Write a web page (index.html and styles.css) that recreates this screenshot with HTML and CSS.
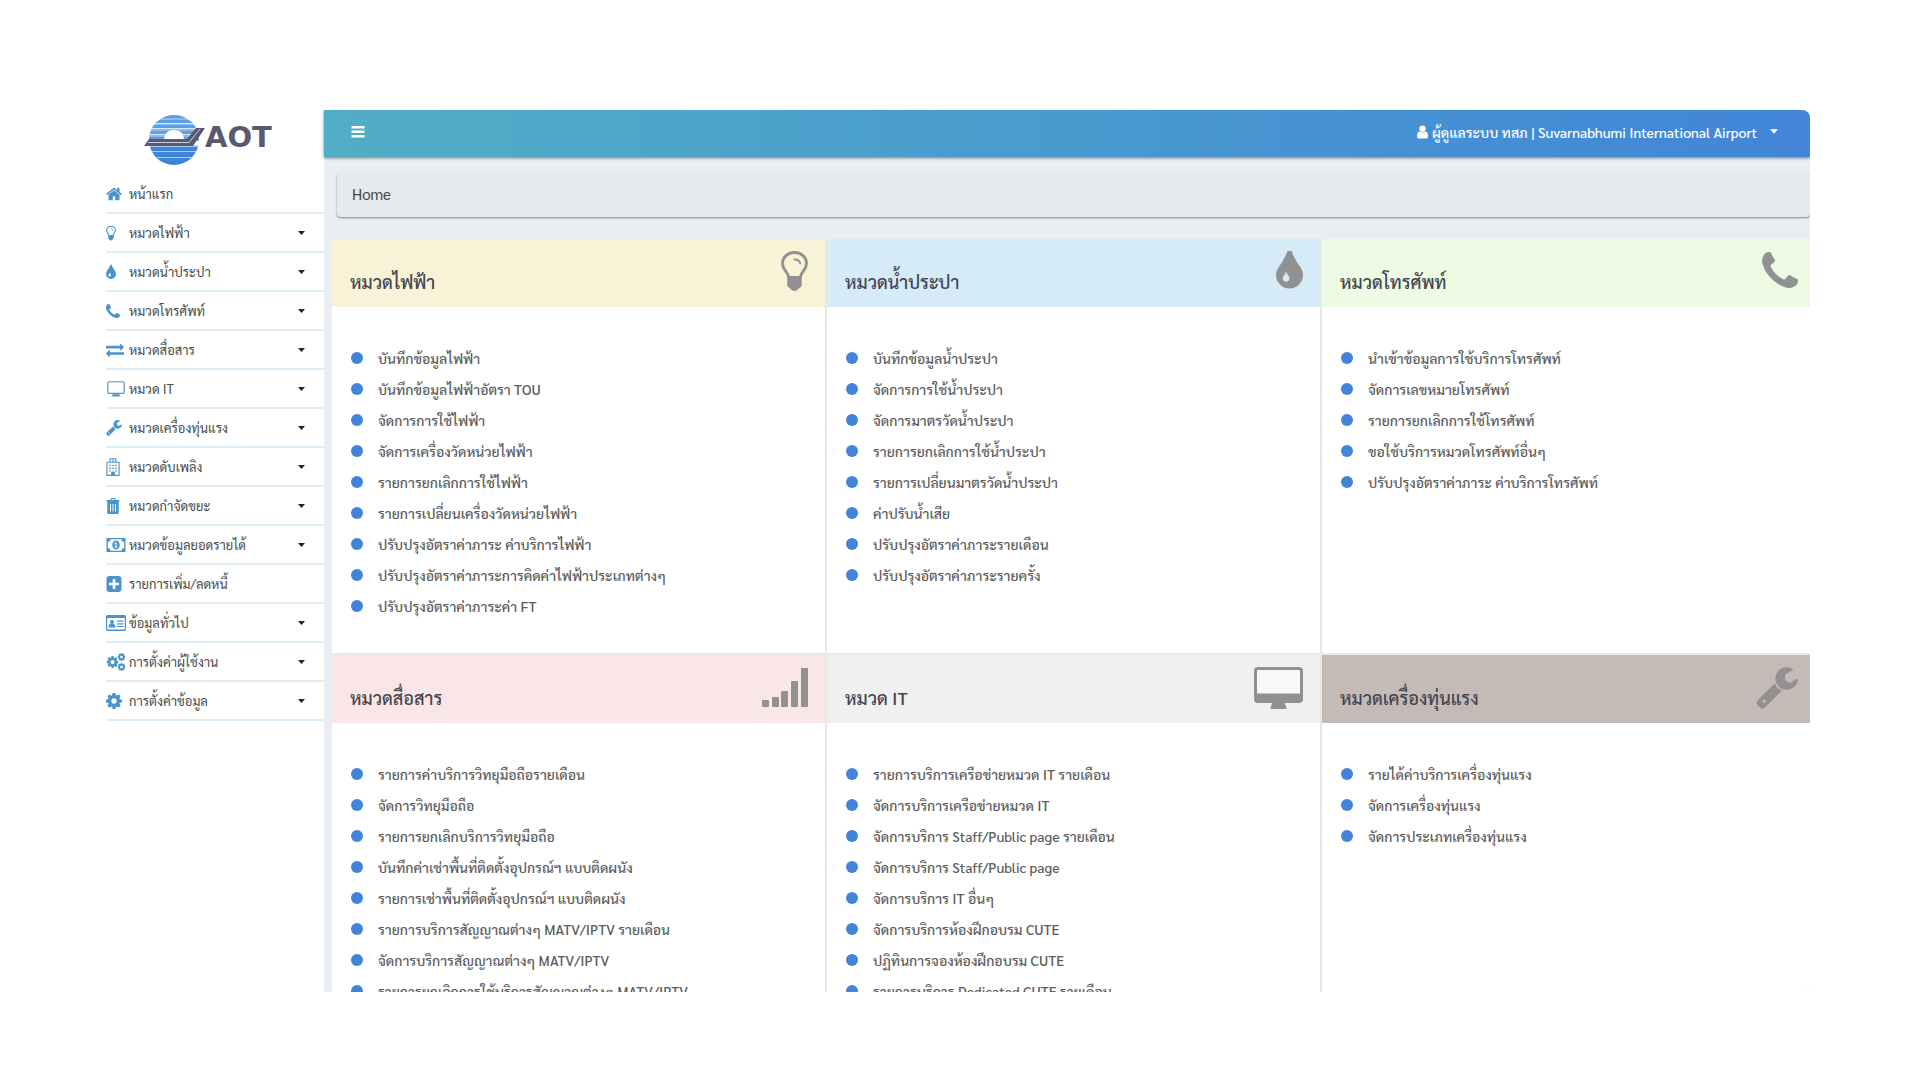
FILE: index.html
```html
<!DOCTYPE html>
<html lang="th">
<head>
<meta charset="utf-8">
<meta name="viewport" content="width=device-width, initial-scale=1">
<title>AOT Utility Management</title>
<link rel="stylesheet" href="styles.css">
</head>
<body>
<svg class="sprite" aria-hidden="true">
  <symbol id="i-home" viewBox="64 256 1664 1280"><path d="M1472 992v480q0 26-19 45t-45 19h-384v-384h-256v384h-384q-26 0-45-19t-19-45v-480q0-1 .5-3t.5-3l575-474 575 474q1 2 1 6zm223-69l-62 74q-8 9-21 11h-3q-13 0-21-7l-692-577-692 577q-12 8-24 7-13-2-21-11l-62-74q-8-10-7-23.5t11-21.5l719-599q32-26 76-26t76 26l244 204v-195q0-14 9-23t23-9h192q14 0 23 9t9 23v408l219 182q10 8 11 21.5t-7 23.5z"/></symbol>
  <symbol id="i-bulb" viewBox="0 0 27 40"><path d="M13.500 1.500C6.800 1.500 1.500 6.300 1.500 12.200c0 3.300 1.500 5.700 3.400 8.100 1.800 2.300 2.600 4 2.800 6.200h11.600c.2-2.200 1-3.900 2.800-6.200 1.900-2.400 3.400-4.800 3.400-8.100 0-5.900-5.300-10.700-12-10.700z" fill="none" stroke="currentColor" stroke-width="2.800"/><path d="M6.300 26h14.400v8.200c0 1.400-1.500 2-3 3.400-1 1.500-2.300 2.400-4.200 2.400s-3.200-.9-4.200-2.400c-1.500-1.400-3-2-3-3.400z"/><path d="M13.500 8.500c3 0 5.300 1.300 5.700 4" fill="none" stroke="currentColor" stroke-width="1.800" stroke-linecap="round"/></symbol>
  <symbol id="i-tint" viewBox="384 128 1024 1408"><path d="M896 1152q0-36-20-69-1-1-15.500-22.500t-25.500-38-25-44-21-50.500q-4-16-21-16t-21 16q-7 23-21 50.500t-25 44-25.500 38-15.500 22.500q-20 33-20 69 0 53 37.500 90.500t90.500 37.500 90.500-37.500 37.500-90.500zm512-128q0 212-150 362t-362 150-362-150-150-362q0-145 81-275 6-9 62.500-90.500t101-151 99.500-178 83-201.500q9-30 34-47t51-17 51.500 17 33.500 47q28 93 83 201.500t99.500 178 101 151 62.500 90.500q81 127 81 275z"/></symbol>
  <symbol id="i-phone" viewBox="192 128 1408 1408"><path d="M1600 1240q0 27-10 70.500t-21 68.500q-21 50-122 106-94 51-186 51-27 0-53-3.500t-57.500-12.500-47-14.500-55.500-20.500-49-18q-98-35-175-83-127-79-264-216t-216-264q-48-77-83-175-3-9-18-49t-20.500-55.500-14.500-47-12.500-57.500-3.500-53q0-92 51-186 56-101 106-122 25-11 68.500-21t70.500-10q14 0 21 3 18 6 53 76 11 19 30 54t35 63.500 31 53.500q3 4 17.500 25t21.500 35.500 7 28.500q0 20-28.500 50t-62 55-62 53-28.500 46q0 9 5 22.500t8.500 20.500 14 24 11.500 19q76 137 174 235t235 174q2 1 19 11.500t24 14 20.500 8.500 22.500 5q18 0 46-28.500t53-62 55-62 50-28.500q14 0 28.500 7t35.500 21.500 25 17.500q25 15 53.500 31t63.500 35 54 30q70 35 76 53 3 7 3 21z"/></symbol>
  <symbol id="i-exchange" viewBox="0 256 1792 1344"><path d="M1792 1184v192q0 13-9.500 22.500t-22.500 9.500h-1376v192q0 13-9.500 22.500t-22.500 9.500q-12 0-24-10l-319-320q-9-9-9-22 0-14 9-23l320-320q9-9 23-9 13 0 22.500 9.500t9.500 22.500v192h1376q13 0 22.500 9.500t9.500 22.500zm0-544q0 14-9 23l-320 320q-9 9-23 9-13 0-22.500-9.500t-9.500-22.500v-192h-1376q-13 0-22.500-9.500t-9.500-22.500v-192q0-13 9.500-22.500t22.500-9.500h1376v-192q0-14 9-23t23-9q12 0 24 10l319 319q9 9 9 23z"/></symbol>
  <symbol id="i-desktop" viewBox="0 0 49 42"><path d="M3 3h43v23.500H3z" fill="#fff" opacity=".5"/><path fill-rule="evenodd" d="M4 0h41a4 4 0 0 1 4 4v28a4 4 0 0 1-4 4H31c0 2 1.500 3.500 1.500 5 0 .6-.4 1-1 1h-14c-.6 0-1-.4-1-1 0-1.500 1.500-3 1.500-5H4a4 4 0 0 1-4-4V4a4 4 0 0 1 4-4zm0 3a1 1 0 0 0-1 1v22.500h43V4a1 1 0 0 0-1-1z"/></symbol>
  <symbol id="i-monitor" viewBox="0 0 19 17"><rect x=".8" y=".8" width="17.400" height="12.400" rx="1.500" fill="none" stroke="currentColor" stroke-width="1.300"/><path d="M6 14h7l1 2.500H5z"/></symbol>
  <symbol id="i-wrench" viewBox="64 0 1664 1664"><path d="M448 1472q0-26-19-45t-45-19-45 19-19 45 19 45 45 19 45-19 19-45zm644-420l-682 682q-37 37-90 37-52 0-91-37l-106-108q-38-36-38-90 0-53 38-91l681-681q39 98 114.500 173.500t173.500 114.500zm634-435q0 39-23 106-47 134-164.500 217.500t-258.500 83.500q-185 0-316.500-131.500t-131.500-316.500 131.500-316.500 316.500-131.500q58 0 121.500 16.500t107.500 46.500q16 11 16 28t-16 28l-293 169v224l193 107q5-3 79-48.500t135.500-81 70.500-35.500q15 0 23.500 10t8.500 25z" transform="translate(0 -118)"/></symbol>
  <symbol id="i-signal" viewBox="0 0 46 40"><rect y="33" width="7" height="7" rx="1"/><rect x="10" y="30" width="7" height="10" rx="1"/><rect x="19" y="24" width="7" height="16" rx="1"/><rect x="29" y="14" width="7" height="26" rx="1"/><rect x="39" y="1" width="7" height="39" rx="1"/></symbol>
  <symbol id="i-hospital" viewBox="0 0 14 19"><path d="M.6 4.500h12.800v13.900H.6zM4 4.500V.8h6v3.700" fill="none" stroke="currentColor" stroke-width="1.200"/><path d="M3 7h1.500v1.500H3zm3.200 0h1.500v1.500H6.200zm3.300 0H11v1.500H9.500zM3 10h1.500v1.500H3zm3.200 0h1.500v1.500H6.200zm3.300 0H11v1.500H9.500zM3 13h1.500v1.500H3zm6.500 0H11v1.500H9.500zM5 18v-3l2-1 2 1v3zM6.400 1.500h1.200v3H6.400z"/></symbol>
  <symbol id="i-trash" viewBox="0 0 13 16"><path fill-rule="evenodd" d="M4 2V.9Q4 0 5 0h3q1 0 1 .9V2h4v1.500h-.8v11q0 1.500-1.400 1.500H2.200Q.8 16 .8 14.500v-11H0V2zm1 0h3V1H5zM3.500 6v7.500h1V6zm2.500 0v7.500h1V6zm2.500 0v7.500h1V6z"/></symbol>
  <symbol id="i-money" viewBox="0 0 19 14"><path fill-rule="evenodd" d="M0 0h19v14H0zm4 1.300Q4 4 1.300 4v6Q4 10 4 12.700h11q0-2.700 2.700-2.700V4Q15 4 15 1.300z"/><path fill-rule="evenodd" d="M9.500 2.500c2.300 0 3.700 2 3.700 4.500s-1.400 4.500-3.700 4.500S5.800 9.500 5.800 7s1.400-4.500 3.700-4.500zM9 4.500L7.800 5.600l.5.500.7-.4v2.800H8v1h3v-1h-1v-4z"/></symbol>
  <symbol id="i-plus" viewBox="0 0 15 16"><path fill-rule="evenodd" d="M3 0h9a3 3 0 0 1 3 3v10a3 3 0 0 1-3 3H3a3 3 0 0 1-3-3V3a3 3 0 0 1 3-3zm3.200 3v3.700H2.500v2.600h3.700V13h2.600V9.300h3.700V6.700H8.800V3z"/></symbol>
  <symbol id="i-card" viewBox="0 0 20 16"><path fill-rule="evenodd" d="M1.500 0h17Q20 0 20 1.500v13q0 1.500-1.500 1.500h-17Q0 16 0 14.500v-13Q0 0 1.500 0zM1.200 3v11.500h17.600V3z"/><circle cx="6" cy="7" r="2"/><path d="M2.500 12.500Q2.500 8.500 6 8.500t3.500 4zM11 5.500h6.500v1.200H11zm0 2.700h6.500v1.200H11zm0 2.700h6.500v1.200H11z"/></symbol>
  <symbol id="i-cog" viewBox="128 128 1536 1536"><path d="M1152 896q0-106-75-181t-181-75-181 75-75 181 75 181 181 75 181-75 75-181zm512-109v222q0 12-8 23t-20 13l-185 28q-19 54-39 91 35 50 107 138 10 12 10 25t-9 23q-27 37-99 108t-94 71q-12 0-26-9l-138-108q-44 23-91 38-16 136-29 186-7 28-36 28h-222q-14 0-24.500-8.500t-11.500-21.500l-28-184q-49-16-90-37l-141 107q-10 9-25 9-14 0-25-11-126-114-165-168-7-10-7-23 0-12 8-23 15-21 51-66.500t54-70.500q-27-50-41-99l-183-27q-13-2-21-12.500t-8-23.500v-222q0-12 8-23t19-13l186-28q14-46 39-92-40-57-107-138-10-12-10-24 0-10 9-23 26-36 98.500-107.500t94.500-71.500q13 0 26 10l138 107q44-23 91-38 16-136 29-186 7-28 36-28h222q14 0 24.500 8.500t11.500 21.500l28 184q49 16 90 37l142-107q9-9 24-9 13 0 25 10 129 119 165 170 7 8 7 22 0 12-8 23-15 21-51 66.500t-54 70.500q26 50 41 98l183 28q13 2 21 12.500t8 23.500z"/></symbol>
  <symbol id="i-cogs" viewBox="0 0 19 18"><use href="#i-cog" y="3" width="12" height="12"/><use href="#i-cog" x="11" width="8" height="8"/><use href="#i-cog" x="11" y="10" width="8" height="8"/></symbol>
  <symbol id="i-user" viewBox="256 128 1280 1536"><path d="M1536 1399q0 109-62.500 187t-150.500 78h-854q-88 0-150.500-78t-62.500-187q0-85 8.500-160.500t31.500-152 58.500-131 94-89 134.500-34.500q131 128 313 128t313-128q76 0 134.500 34.500t94 89 58.500 131 31.500 152 8.500 160.500zm-256-887q0 159-112.500 271.500t-271.500 112.500-271.500-112.500-112.500-271.500 112.500-271.500 271.500-112.500 271.500 112.500 112.500 271.500z"/></symbol>
  <symbol id="i-caret" viewBox="0 0 7 4"><path d="M0 0h7L3.500 4z"/></symbol>
  <symbol id="i-bars" viewBox="0 0 13 12"><path d="M0 0h13v2.500H0zm0 4.500h13V7H0zM0 9h13v2.500H0z"/></symbol>
</svg>

<div class="app">
  <aside class="sidebar">
    <a class="logo" href="#" aria-label="AOT">
      <svg viewBox="0 0 134 54">
        <defs><clipPath id="globe"><circle cx="30" cy="28" r="25"/></clipPath></defs>
        <g clip-path="url(#globe)">
          <path fill="#8dbcec" d="M0 2h60v27H0z"/>
          <path fill="#5c9fe4" d="M0 3h60v3H0zm0 5h60v3H0zm0 5h60v4H0zm0 6h60v4H0zm0 6h60v4H0z"/>
          <path fill="#d7e9fa" d="M0 11h60v1H0zm0 5h60v1H0zm0 6h60v1H0z"/>
          <path fill="#3f84da" d="M0 34h60v5H0zm0 6h60v6H0zm0 6h60v8H0z"/>
          <path fill="#a9cdf2" d="M0 33h60v2H0zm0 6h60v1H0zm0 6h60v1H0z"/>
        </g>
        <path fill="#fff" d="M20 27q1-9 10-9t10 9z"/>
        <path fill="#595a70" d="M5 27h38l9-11h9L49 34H0z"/>
        <path stroke="#c9cbd6" fill="none" d="M4 30.500h41L56 17"/>
        <text class="wordmark" x="61" y="35">AOT</text>
      </svg>
    </a>
    <nav class="menu">
      <a href="#"><svg class="ic w16 h14"><use href="#i-home"/></svg>หน้าแรก</a>
      <a href="#"><svg class="ic w10 h16"><use href="#i-bulb"/></svg>หมวดไฟฟ้า<svg class="caret"><use href="#i-caret"/></svg></a>
      <a href="#"><svg class="ic w10 h16"><use href="#i-tint"/></svg>หมวดน้ำประปา<svg class="caret"><use href="#i-caret"/></svg></a>
      <a href="#"><svg class="ic w14 h16"><use href="#i-phone"/></svg>หมวดโทรศัพท์<svg class="caret"><use href="#i-caret"/></svg></a>
      <a href="#"><svg class="ic w18 h14"><use href="#i-exchange"/></svg>หมวดสื่อสาร<svg class="caret"><use href="#i-caret"/></svg></a>
      <a href="#"><svg class="ic w20 h16"><use href="#i-monitor"/></svg>หมวด IT<svg class="caret"><use href="#i-caret"/></svg></a>
      <a href="#"><svg class="ic w16 h16"><use href="#i-wrench"/></svg>หมวดเครื่องทุ่นแรง<svg class="caret"><use href="#i-caret"/></svg></a>
      <a href="#"><svg class="ic w14 h18"><use href="#i-hospital"/></svg>หมวดดับเพลิง<svg class="caret"><use href="#i-caret"/></svg></a>
      <a href="#"><svg class="ic w14 h16"><use href="#i-trash"/></svg>หมวดกำจัดขยะ<svg class="caret"><use href="#i-caret"/></svg></a>
      <a href="#"><svg class="ic w20 h14"><use href="#i-money"/></svg>หมวดข้อมูลยอดรายได้<svg class="caret"><use href="#i-caret"/></svg></a>
      <a href="#"><svg class="ic w16 h16"><use href="#i-plus"/></svg>รายการเพิ่ม/ลดหนี้</a>
      <a href="#"><svg class="ic w20 h16"><use href="#i-card"/></svg>ข้อมูลทั่วไป<svg class="caret"><use href="#i-caret"/></svg></a>
      <a href="#"><svg class="ic w20 h18"><use href="#i-cogs"/></svg>การตั้งค่าผู้ใช้งาน<svg class="caret"><use href="#i-caret"/></svg></a>
      <a href="#"><svg class="ic w16 h16"><use href="#i-cog"/></svg>การตั้งค่าข้อมูล<svg class="caret"><use href="#i-caret"/></svg></a>
    </nav>
  </aside>

  <main class="main">
    <header class="topbar">
      <button class="toggle" type="button" aria-label="เมนู"><svg><use href="#i-bars"/></svg></button>
      <button class="account" type="button"><svg class="user"><use href="#i-user"/></svg><span>ผู้ดูแลระบบ ทสภ | Suvarnabhumi International Airport</span><svg class="caret"><use href="#i-caret"/></svg></button>
    </header>
    <div class="crumb">Home</div>
    <div class="cards">
      <section class="card yellow">
        <h2>หมวดไฟฟ้า<svg class="w27 h40"><use href="#i-bulb"/></svg></h2>
        <ul>
          <li><a href="#">บันทึกข้อมูลไฟฟ้า</a></li>
          <li><a href="#">บันทึกข้อมูลไฟฟ้าอัตรา TOU</a></li>
          <li><a href="#">จัดการการใช้ไฟฟ้า</a></li>
          <li><a href="#">จัดการเครื่องวัดหน่วยไฟฟ้า</a></li>
          <li><a href="#">รายการยกเลิกการใช้ไฟฟ้า</a></li>
          <li><a href="#">รายการเปลี่ยนเครื่องวัดหน่วยไฟฟ้า</a></li>
          <li><a href="#">ปรับปรุงอัตราค่าภาระ ค่าบริการไฟฟ้า</a></li>
          <li><a href="#">ปรับปรุงอัตราค่าภาระการคิดค่าไฟฟ้าประเภทต่างๆ</a></li>
          <li><a href="#">ปรับปรุงอัตราค่าภาระค่า FT</a></li>
        </ul>
      </section>
      <section class="card blue">
        <h2>หมวดน้ำประปา<svg class="w27 h38"><use href="#i-tint"/></svg></h2>
        <ul>
          <li><a href="#">บันทึกข้อมูลน้ำประปา</a></li>
          <li><a href="#">จัดการการใช้น้ำประปา</a></li>
          <li><a href="#">จัดการมาตรวัดน้ำประปา</a></li>
          <li><a href="#">รายการยกเลิกการใช้น้ำประปา</a></li>
          <li><a href="#">รายการเปลี่ยนมาตรวัดน้ำประปา</a></li>
          <li><a href="#">ค่าปรับน้ำเสีย</a></li>
          <li><a href="#">ปรับปรุงอัตราค่าภาระรายเดือน</a></li>
          <li><a href="#">ปรับปรุงอัตราค่าภาระรายครั้ง</a></li>
        </ul>
      </section>
      <section class="card green">
        <h2>หมวดโทรศัพท์<svg class="w36 h38"><use href="#i-phone"/></svg></h2>
        <ul>
          <li><a href="#">นำเข้าข้อมูลการใช้บริการโทรศัพท์</a></li>
          <li><a href="#">จัดการเลขหมายโทรศัพท์</a></li>
          <li><a href="#">รายการยกเลิกการใช้โทรศัพท์</a></li>
          <li><a href="#">ขอใช้บริการหมวดโทรศัพท์อื่นๆ</a></li>
          <li><a href="#">ปรับปรุงอัตราค่าภาระ ค่าบริการโทรศัพท์</a></li>
        </ul>
      </section>
      <section class="card pink">
        <h2>หมวดสื่อสาร<svg class="w46 h40"><use href="#i-signal"/></svg></h2>
        <ul>
          <li><a href="#">รายการค่าบริการวิทยุมือถือรายเดือน</a></li>
          <li><a href="#">จัดการวิทยุมือถือ</a></li>
          <li><a href="#">รายการยกเลิกบริการวิทยุมือถือ</a></li>
          <li><a href="#">บันทึกค่าเช่าพื้นที่ติดตั้งอุปกรณ์ฯ แบบติดผนัง</a></li>
          <li><a href="#">รายการเช่าพื้นที่ติดตั้งอุปกรณ์ฯ แบบติดผนัง</a></li>
          <li><a href="#">รายการบริการสัญญาณต่างๆ MATV/IPTV รายเดือน</a></li>
          <li><a href="#">จัดการบริการสัญญาณต่างๆ MATV/IPTV</a></li>
          <li><a href="#">รายการยกเลิกการใช้บริการสัญญาณต่างๆ MATV/IPTV</a></li>
        </ul>
      </section>
      <section class="card grey">
        <h2>หมวด IT<svg class="w49 h42"><use href="#i-desktop"/></svg></h2>
        <ul>
          <li><a href="#">รายการบริการเครือข่ายหมวด IT รายเดือน</a></li>
          <li><a href="#">จัดการบริการเครือข่ายหมวด IT</a></li>
          <li><a href="#">จัดการบริการ Staff/Public page รายเดือน</a></li>
          <li><a href="#">จัดการบริการ Staff/Public page</a></li>
          <li><a href="#">จัดการบริการ IT อื่นๆ</a></li>
          <li><a href="#">จัดการบริการห้องฝึกอบรม CUTE</a></li>
          <li><a href="#">ปฏิทินการจองห้องฝึกอบรม CUTE</a></li>
          <li><a href="#">รายการบริการ Dedicated CUTE รายเดือน</a></li>
        </ul>
      </section>
      <section class="card brown">
        <h2>หมวดเครื่องทุ่นแรง<svg class="w42 h42"><use href="#i-wrench"/></svg></h2>
        <ul>
          <li><a href="#">รายได้ค่าบริการเครื่องทุ่นแรง</a></li>
          <li><a href="#">จัดการเครื่องทุ่นแรง</a></li>
          <li><a href="#">จัดการประเภทเครื่องทุ่นแรง</a></li>
        </ul>
      </section>
    </div>
  </main>
</div>
</body>
</html>
```
FILE: styles.css
```css
* { box-sizing: border-box; }
body {
  margin: 0;
  padding: 110px 110px 88px 106px;
  height: 100vh;
  overflow: hidden;
  background: #fff;
  color: #5c5c5c;
  font: 14px/20px Sarabun, "Noto Sans", sans-serif;
}
a { color: inherit; text-decoration: none; }
svg { fill: currentColor; flex: none; }
.sprite { display: none; }
.app {
  display: flex;
  height: 100%;
  overflow: hidden;
  border-radius: 8px;
}

/* Sidebar */
.sidebar { width: 218px; flex: none; background: #fff; }
.logo { display: block; height: 65px; padding: 2px 0 0 38px; }
.logo svg { display: block; width: 134px; height: 54px; }
.wordmark { fill: #595a70; font: bold 29px "DejaVu Sans", sans-serif; }
.menu a {
  display: grid;
  grid-template-columns: 23px 1fr auto;
  align-items: center;
  height: 39px;
  border-bottom: 2px solid #dceefa;
  font-size: 13px;
  color: #4c4c4c;
}
.ic { color: #4a94cc; }
.caret { width: 7px; height: 4px; color: #222; }
.menu .caret { margin-right: 19px; }

/* Content */
.main {
  flex: 1;
  min-width: 0;
  background: #e9eef3;
}
.topbar {
  display: flex;
  align-items: center;
  justify-content: space-between;
  height: 47px;
  padding: 0 32px 4px 27px;
  background: linear-gradient(to right, #51aec5, #4285d8);
  box-shadow: 0 1px 3px rgba(0, 0, 0, .5);
  color: #fff;
}
button {
  display: flex;
  align-items: center;
  padding: 0;
  border: 0;
  background: none;
  color: inherit;
  font: inherit;
}
.toggle svg { width: 14px; height: 12px; }
.account { font-weight: 500; }
.user { width: 11px; height: 14px; margin-right: 4px; }
.account .caret { margin-left: 13px; color: #fff; width: 8px; height: 5px; }
.crumb {
  margin: 15px 0 22px 13px;
  padding: 12px 15px 13px;
  border-radius: 4px;
  background: #e7eaed;
  box-shadow: 0 1px 2px rgba(0, 0, 0, .45);
  color: #444;
  font-size: 15px;
}
.cards {
  display: grid;
  grid-template-columns: 493fr 493fr 488fr;
  gap: 2px;
  margin-left: 8px;
  background: #e6e8ea;
}
.card { min-height: 413px; background: #fff; }
.card h2 {
  display: flex;
  align-items: flex-start;
  justify-content: space-between;
  height: 68px;
  margin: 0;
  padding: 12px 17px 0 18px;
  color: #444450;
  font-size: 18px;
  font-weight: 500;
  line-height: 62px;
}
.card h2 svg { color: #919191; }
.card:nth-child(3n) h2 { padding-right: 12px; }
.card ul { margin: 0; padding: 35px 0 32px; list-style: none; }
.card li {
  display: flex;
  align-items: center;
  height: 31px;
  padding-left: 19px;
  font-weight: 500;
}
.card li::before {
  content: "";
  width: 12px;
  height: 12px;
  margin-right: 15px;
  border-radius: 50%;
  background: #4285d8;
}
.yellow h2 { background: #f8f3d6; }
.blue h2 { background: #d6ebf8; }
.green h2 { background: #edfbe4; }
.pink h2 { background: #fae5e7; }
.grey h2 { background: #f0f0f0; }
.brown h2 { background: #c4bbb7; }

/* Icon sizes */
.w10 { width: 10px; } .w14 { width: 14px; } .w16 { width: 16px; } .w18 { width: 18px; }
.w20 { width: 20px; } .w27 { width: 27px; } .w36 { width: 36px; } .w42 { width: 42px; }
.w46 { width: 46px; } .w49 { width: 49px; }
.h14 { height: 14px; } .h16 { height: 16px; } .h18 { height: 18px; }
.h38 { height: 38px; } .h40 { height: 40px; } .h42 { height: 42px; }
```
